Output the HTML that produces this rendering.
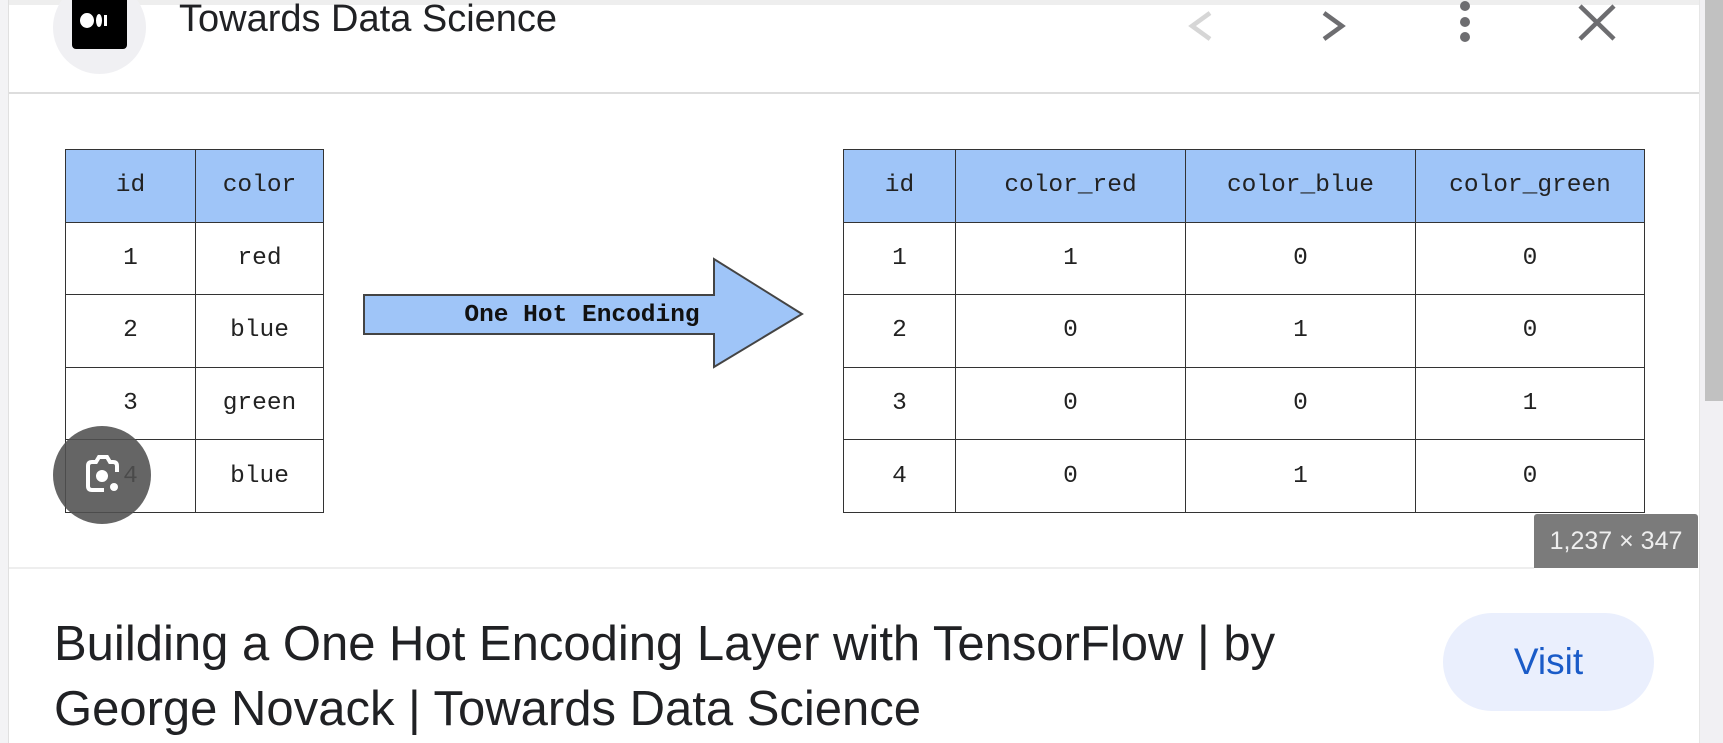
<!DOCTYPE html>
<html><head><meta charset="utf-8"><style>
*{margin:0;padding:0;box-sizing:border-box}
body{width:1723px;height:743px;overflow:hidden;background:#fff;position:relative;font-family:"Liberation Sans",sans-serif}
.a{position:absolute}
table{position:absolute;border-collapse:collapse;font-family:"Liberation Mono",monospace;font-size:24.5px;color:#222}
td{border:1.5px solid #333;text-align:center;vertical-align:middle;height:72.6px}
tr.h td{background:#9fc5f8}
</style></head><body>
<div class="a" style="left:0;top:0;width:1723px;height:5px;background:#eee"></div>
<div class="a" style="left:0;top:0;width:9px;height:743px;background:#f3f3f5;border-right:1px solid #e0e0e0"></div>
<div class="a" style="left:1699px;top:0;width:24px;height:743px;background:#f1f0f3;border-left:1px solid #e6e6e6"></div>
<div class="a" style="left:1705px;top:0;width:18px;height:401px;background:#c1c1c1"></div>
<div class="a" style="left:53px;top:-19px;width:93px;height:93px;border-radius:50%;background:#f0f0f3"></div>
<div class="a" style="left:72px;top:0;width:55px;height:49px;background:#000;border-radius:0 0 4px 4px"></div>
<div class="a" style="left:80px;top:13px;width:14px;height:15px;border-radius:50%;background:#fff"></div>
<div class="a" style="left:96px;top:14px;width:6px;height:13px;border-radius:50%;background:#fff"></div>
<div class="a" style="left:104px;top:15px;width:3px;height:11px;background:#fff"></div>
<div class="a" style="left:179px;top:-2px;font-size:38px;color:#202124">Towards Data Science</div>
<svg class="a" style="left:1180px;top:0" width="450" height="45" fill="none" stroke-width="4.5">
<path d="M30 13 L12 26 L30 39" stroke="#d6d6d6"/>
<path d="M144 13 L162 26 L144 39" stroke="#6d6d70"/>
<circle cx="285" cy="6" r="5" fill="#6d6d70" stroke="none"/><circle cx="285" cy="22" r="5" fill="#6d6d70" stroke="none"/><circle cx="285" cy="37" r="5" fill="#6d6d70" stroke="none"/>
<path d="M400 6 L434 39 M434 6 L400 39" stroke="#6d6d70"/>
</svg>
<div class="a" style="left:9px;top:92px;width:1690px;height:2px;background:#ddd"></div>
<table style="left:65px;top:149px;width:259px">
<tr class="h"><td style="width:130px">id</td><td>color</td></tr>
<tr><td>1</td><td>red</td></tr><tr><td>2</td><td>blue</td></tr><tr><td>3</td><td>green</td></tr><tr><td>4</td><td>blue</td></tr>
</table>
<table style="left:843px;top:149px;width:802px">
<tr class="h"><td style="width:112px">id</td><td style="width:230px">color_red</td><td style="width:230px">color_blue</td><td>color_green</td></tr>
<tr><td>1</td><td>1</td><td>0</td><td>0</td></tr>
<tr><td>2</td><td>0</td><td>1</td><td>0</td></tr>
<tr><td>3</td><td>0</td><td>0</td><td>1</td></tr>
<tr><td>4</td><td>0</td><td>1</td><td>0</td></tr>
</table>
<svg class="a" style="left:360px;top:255px" width="450" height="120">
<path d="M4 40 H354 V4 L442 59 L354 112 V79 H4 Z" fill="#9fc5f8" stroke="#444" stroke-width="2"/>
<text x="222" y="66" text-anchor="middle" font-family="Liberation Mono,monospace" font-weight="bold" font-size="24.5" fill="#111">One Hot Encoding</text>
</svg>
<div class="a" style="left:53px;top:426px;width:98px;height:98px;border-radius:50%;background:rgba(80,80,80,.88)"></div>
<svg class="a" style="left:78px;top:450px" width="50" height="50" fill="none" stroke="#fff" stroke-width="4">
<path d="M10 36 V16 Q10 12 14 12 H18 L21 7 H29 L32 12 H35 Q39 12 39 16 V22"/>
<path d="M10 36 Q10 40 14 40 H26"/>
<circle cx="24" cy="26" r="4" fill="#fff"/><circle cx="36" cy="37" r="4" fill="#fff" stroke="none"/>
</svg>
<div class="a" style="left:1534px;top:514px;width:164px;height:54px;background:#7b7b7b;border-radius:3px 3px 0 0;color:#eee;font-size:25px;line-height:54px;text-align:center">1,237 × 347</div>
<div class="a" style="left:9px;top:567px;width:1525px;height:2px;background:#eee"></div>
<div class="a" style="left:54px;top:612px;font-size:49px;line-height:65px;color:#202124;letter-spacing:0px">Building a One Hot Encoding Layer with TensorFlow | by<br>George Novack | Towards Data Science</div>
<div class="a" style="left:1443px;top:613px;width:211px;height:98px;border-radius:49px;background:#eaeffd;color:#1a5bc8;font-size:37px;line-height:98px;text-align:center">Visit</div>
</body></html>
